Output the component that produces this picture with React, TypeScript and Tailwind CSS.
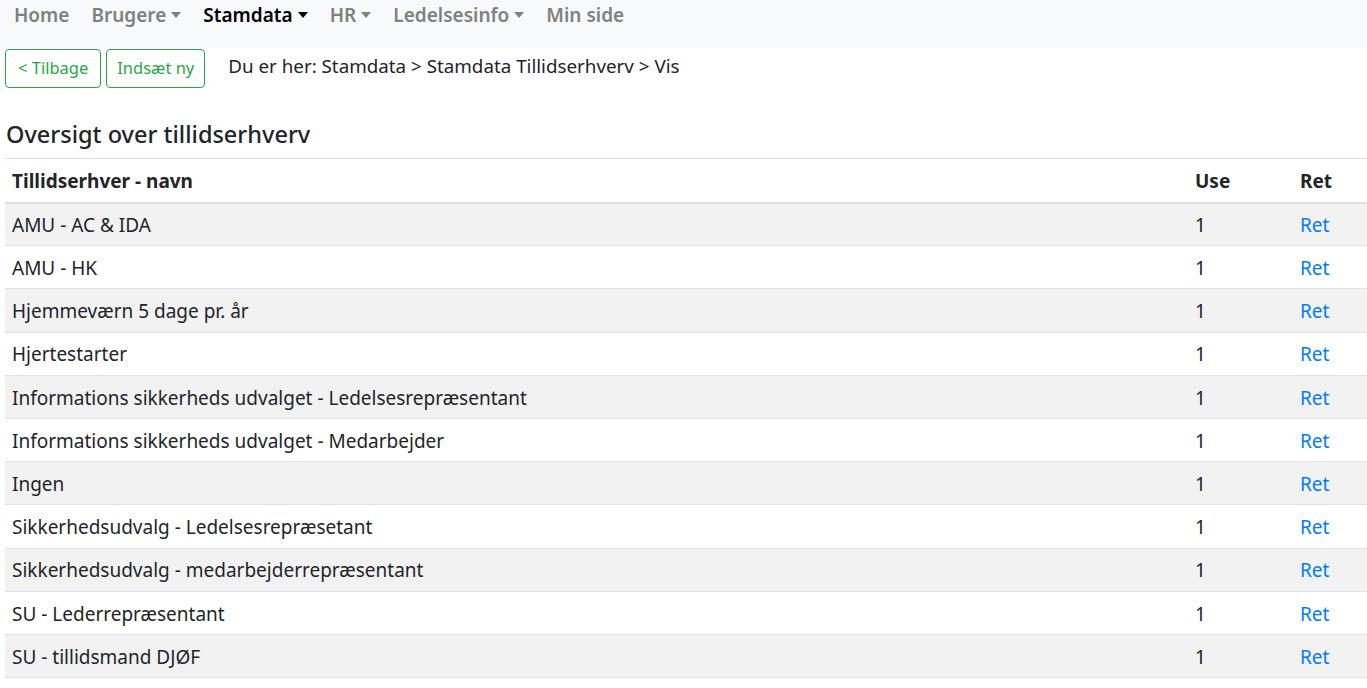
const navItems = [
  { label: "Home", caret: false, active: false },
  { label: "Brugere", caret: true, active: false },
  { label: "Stamdata", caret: true, active: true },
  { label: "HR", caret: true, active: false },
  { label: "Ledelsesinfo", caret: true, active: false },
  { label: "Min side", caret: false, active: false },
];

const rows = [
  "AMU - AC & IDA",
  "AMU - HK",
  "Hjemmeværn 5 dage pr. år",
  "Hjertestarter",
  "Informations sikkerheds udvalget - Ledelsesrepræsentant",
  "Informations sikkerheds udvalget - Medarbejder",
  "Ingen",
  "Sikkerhedsudvalg - Ledelsesrepræsetant",
  "Sikkerhedsudvalg - medarbejderrepræsentant",
  "SU - Lederrepræsentant",
  "SU - tillidsmand DJØF",
];

function Caret() {
  return (
    <span className="ml-[5px] inline-block h-0 w-0 border-x-[5px] border-t-[6px] border-x-transparent border-t-current align-middle" />
  );
}

export default function App() {
  return (
    <div
      className="min-h-screen bg-white text-[19px] text-[#212529]"
      style={{ fontFamily: '"Noto Sans", "Open Sans", sans-serif' }}
    >
      <nav className="flex h-[48px] items-start gap-[22px] bg-[#f8f9fa] pl-[14px]">
        {navItems.map((n) => (
          <span
            key={n.label}
            className={`mt-[1px] flex items-center font-semibold leading-[28px] ${
              n.active ? "text-black" : "text-[#808080]"
            }`}
          >
            {n.label}
            {n.caret && <Caret />}
          </span>
        ))}
      </nav>

      <div className="flex items-center gap-[5px] pl-[5px] pt-[1px]">
        <button className="h-[39px] rounded-[4px] border border-[#28a745] px-[12px] text-[16.5px] text-[#28a745]">
          &lt; Tilbage
        </button>
        <button className="h-[39px] rounded-[4px] border border-[#28a745] px-[10px] text-[16.5px] text-[#28a745]">
          Indsæt ny
        </button>
        <span className="-mt-[5px] ml-[18px] text-[18.8px]">
          Du er her: Stamdata &gt; Stamdata Tillidserhverv &gt; Vis
        </span>
      </div>

      <h4 className="mt-[30px] pl-[6px] text-[23.5px] font-medium leading-[32px]">
        Oversigt over tillidserhverv
      </h4>

      <table className="ml-[5px] mt-[8px] w-[1362px] border-collapse">
        <thead>
          <tr className="h-[44px] border-t border-b-2 border-[#dee2e6] text-left">
            <th className="pl-[7px] pt-[2px] font-bold">Tillidserhver - navn</th>
            <th className="w-[105px] pt-[2px] font-bold">Use</th>
            <th className="w-[67px] pt-[2px] font-bold">Ret</th>
          </tr>
        </thead>
        <tbody>
          {rows.map((r, i) => (
            <tr
              key={r}
              className={`h-[43.2px] border-b border-[#dee2e6] ${
                i % 2 === 0 ? "bg-[#f2f2f2]" : "bg-white"
              }`}
            >
              <td className="pl-[7px] pt-[2px]">{r}</td>
              <td className="pt-[2px]">1</td>
              <td className="pt-[2px] text-[#007bff]">Ret</td>
            </tr>
          ))}
        </tbody>
      </table>
    </div>
  );
}
